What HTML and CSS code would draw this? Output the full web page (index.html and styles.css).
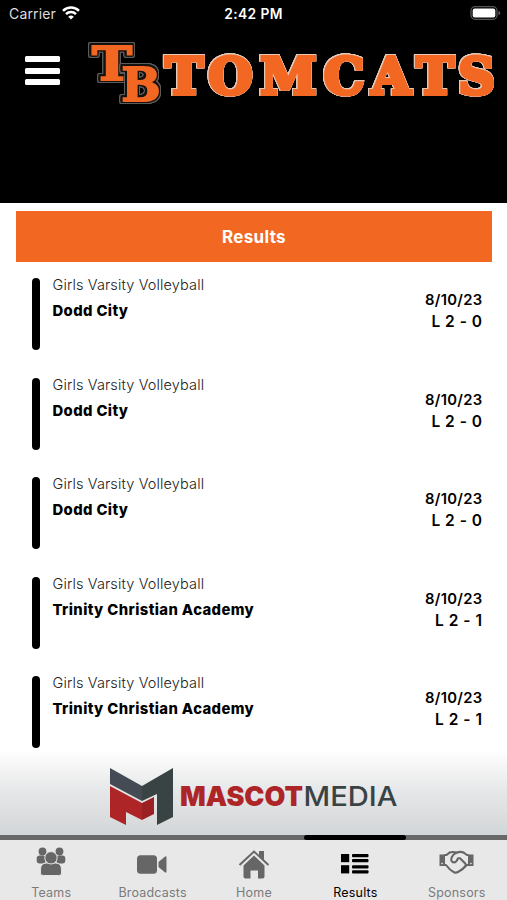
FILE: index.html
```
<!DOCTYPE html>
<html lang="en">
<head>
  <meta charset="UTF-8">
  <title>Tomcats Results</title>
  <link rel="stylesheet" href="styles.css">
</head>
<body>
  <div class="app">
    <header class="header">
      <!-- Status bar -->
      <div class="status-bar">
        <div class="carrier">
          <span class="carrier-name">Carrier</span>
          <svg class="wifi" width="18" height="14" viewBox="0 0 18 14" fill="none" stroke="#fff" stroke-width="2.5">
            <path d="M1 4.9a11.3 11.3 0 0 1 16 0"/>
            <path d="M4 8.2a7 7 0 0 1 10 0"/>
            <path d="M9 13.6L6.2 10.8a4 4 0 0 1 5.6 0z" fill="#fff" stroke="none"/>
          </svg>
        </div>
        <span class="time">2:42 PM</span>
        <svg class="battery" width="31" height="14" viewBox="0 0 31 14">
          <rect x="1" y=".7" width="26" height="12.6" rx="4" fill="none" stroke="#555" stroke-width="1.3"/>
          <rect x="2.7" y="2.4" width="22.6" height="9.2" rx="2" fill="#fff"/>
          <path d="M28.5 5v4.2q1.8-.6 1.8-2.1t-1.8-2.1z" fill="#666"/>
        </svg>
      </div>

      <div class="brand-row">
        <button class="menu-button" title="Menu"><span></span><span></span><span></span></button>
        <svg class="logo" width="412" height="76" viewBox="86 36 412 76">
          <text class="mono" x="92" y="80" textLength="40" lengthAdjust="spacingAndGlyphs">T</text>
          <text class="mono" x="121.5" y="100.7" textLength="39" lengthAdjust="spacingAndGlyphs">B</text>
          <text class="word" x="165.5 208.5 260.5 324 371.5 416.5 458.5" y="93.7">TOMCATS</text>
        </svg>
      </div>
    </header>

    <main class="content">
      <h1 class="title">Results</h1>
      <ul class="results">
        <li class="result">
          <div class="game"><span class="sport">Girls Varsity Volleyball</span><span class="opponent">Dodd City</span></div>
          <div class="outcome"><span>8/10/23</span><span class="score">L 2 - 0</span></div>
        </li>
        <li class="result">
          <div class="game"><span class="sport">Girls Varsity Volleyball</span><span class="opponent">Dodd City</span></div>
          <div class="outcome"><span>8/10/23</span><span class="score">L 2 - 0</span></div>
        </li>
        <li class="result">
          <div class="game"><span class="sport">Girls Varsity Volleyball</span><span class="opponent">Dodd City</span></div>
          <div class="outcome"><span>8/10/23</span><span class="score">L 2 - 0</span></div>
        </li>
        <li class="result">
          <div class="game"><span class="sport">Girls Varsity Volleyball</span><span class="opponent">Trinity Christian Academy</span></div>
          <div class="outcome"><span>8/10/23</span><span class="score">L 2 - 1</span></div>
        </li>
        <li class="result">
          <div class="game"><span class="sport">Girls Varsity Volleyball</span><span class="opponent">Trinity Christian Academy</span></div>
          <div class="outcome"><span>8/10/23</span><span class="score">L 2 - 1</span></div>
        </li>
      </ul>
    </main>

    <!-- Sponsor banner -->
    <div class="sponsor">
      <svg width="290" height="60" viewBox="110 767 290 60">
        <path d="M110 768l32 18v15l-32-17z" fill="#444b55"/>
        <path d="M142 786l31-18v49l-16 8v-31l-15 7z" fill="#3a4344"/>
        <path d="M110 786l32 17v17l-16-8v13l-16-8z" fill="#ad2527"/>
        <path d="M142 803l12-6v17l-12 6z" fill="#9c2023"/>
        <text class="mascot" x="180" y="806" textLength="123" lengthAdjust="spacingAndGlyphs">MASCOT</text>
        <text class="media" x="303.5" y="806" textLength="94" lengthAdjust="spacingAndGlyphs">MEDIA</text>
      </svg>
    </div>

    <nav class="tabs">
      <a class="tab">
        <svg width="34" height="32" viewBox="0 0 34 32" fill="currentColor">
          <circle cx="8.5" cy="6.5" r="3.9"/><circle cx="25.5" cy="6.5" r="3.9"/>
          <rect x="2.7" y="10.5" width="9" height="8" rx="3"/><rect x="22.3" y="10.5" width="9" height="8" rx="3"/>
          <path d="M6.5 28.5v-4q0-6.5 6-6.5h9q6 0 6 6.5v4q0 2-3 2h-15q-3 0-3-2z" stroke="#e8e8e8"/>
          <circle cx="17" cy="12.8" r="6.2" stroke="#e8e8e8"/>
        </svg>
        <span>Teams</span>
      </a>
      <a class="tab">
        <svg width="34" height="32" viewBox="0 0 34 32" fill="currentColor">
          <rect x="1" y="10.3" width="20" height="18.5" rx="3.5"/>
          <path d="M22.5 17l6-5q2-1.5 2 .5v14q0 2-2 .5l-6-5z"/>
        </svg>
        <span>Broadcasts</span>
      </a>
      <a class="tab">
        <svg width="34" height="34" viewBox="0 0 34 34" fill="currentColor">
          <path d="M6.5 20.5L17 10.5 27.500 20.500v11q0 2-2 2h-4.500v-8h-7.500v8h-5q-2 0-2-2z"/>
          <path d="M2.500 20L17 6.500 31.500 20" fill="none" stroke="currentColor" stroke-width="2"/>
          <path d="M22 6h5v9l-5-4.500z"/>
        </svg>
        <span>Home</span>
      </a>
      <a class="tab active">
        <svg width="34" height="32" viewBox="0 0 34 32" fill="currentColor">
          <rect x="3" y="9" width="8.2" height="8.2"/><rect x="3" y="20.2" width="8.2" height="8.2"/>
          <rect x="14" y="9" width="16.5" height="3.2" rx="1"/><rect x="14" y="14" width="16.5" height="3.2" rx="1"/>
          <rect x="14" y="20.2" width="16.5" height="3.2" rx="1"/><rect x="14" y="25.2" width="16.5" height="3.2" rx="1"/>
        </svg>
        <span>Results</span>
      </a>
      <a class="tab">
        <svg width="36" height="32" viewBox="0 0 36 32" fill="none" stroke="currentColor" stroke-width="2.1" stroke-linejoin="round" stroke-linecap="round">
          <path d="M6 10h1.500l3-2.400q4-1.400 7 .2 4-1.800 7.500 0l3 2.200H29M6 20h1q3.500 5 8 7.200 2 1 4-.2 5-2.500 8-6.500l1-.5h1"/>
          <path d="M17.500 7.800q-3 1-4.500 4-2 4 1 5.500 3 .8 5-4h2l5.500 5.500q1 1.500-.5 3"/>
          <path d="M.5 9.500H6V21H.5zM29 9.500h5.500V21H29z" fill="currentColor" stroke="none"/>
          <path d="M3 18.500h.2M31.800 18.500h.2" stroke="#e8e8e8" stroke-width="1.500"/>
        </svg>
        <span>Sponsors</span>
      </a>
    </nav>
  </div>
</body>
</html>
```
FILE: styles.css
```
* {
  box-sizing: border-box;
}

body {
  margin: 0;
  font-family: Inter, sans-serif;
  background: #fff;
}

.app {
  display: flex;
  flex-direction: column;
  width: 507px;
  height: 900px;
  overflow: hidden;
}

.header {
  flex: none;
  height: 203px;
  background: #000;
  color: #fff;
}

.status-bar {
  display: grid;
  grid-template-columns: 1fr auto 1fr;
  align-items: center;
  height: 28px;
  padding: 0 6px 1px 9px;
}

.carrier {
  display: flex;
  align-items: center;
  gap: 6px;
  font-size: 14px;
  color: #ddd;
}

.carrier-name {
  width: 47px;
  letter-spacing: 0.15px;
}

.wifi {
  margin-top: -1px;
}

.time {
  margin-left: -3px;
  font-size: 13.8px;
  font-weight: 600;
  letter-spacing: 0.4px;
}

.battery {
  justify-self: end;
  margin-top: -1px;
}

.brand-row {
  display: flex;
  align-items: flex-start;
  padding: 8px 9px 0 25px;
}

.menu-button {
  display: flex;
  flex-direction: column;
  gap: 5.5px;
  width: 36px;
  margin: 20px 25px 0 0;
  padding: 0;
  border: none;
  background: none;
}

.menu-button span {
  width: 35px;
  height: 6px;
  border-radius: 1.5px;
  background: #fff;
}

.logo {
  flex: none;
}

.mono {
  font: bold 47px "DejaVu Serif", serif;
  fill: #f26722;
  stroke: #f26722;
  stroke-width: 2px;
  filter: drop-shadow(1.3px 0 #15110e) drop-shadow(-1.3px 0 #15110e)
    drop-shadow(0 1.3px #15110e) drop-shadow(0 -1.3px #15110e)
    drop-shadow(1px 0 #5c5c5c) drop-shadow(-1px 0 #5c5c5c)
    drop-shadow(0 1px #5c5c5c) drop-shadow(0 -1px #5c5c5c);
}

.word {
  font: bold 50.5px "DejaVu Serif", serif;
  fill: #f26722;
  stroke: #f26722;
  stroke-width: 4.2px;
  filter: drop-shadow(0.7px 0 #e3c9ba) drop-shadow(-0.7px 0 #e3c9ba)
    drop-shadow(0 0.7px #e3c9ba) drop-shadow(0 -0.7px #e3c9ba);
}

.content {
  flex: none;
  height: 547px;
  padding: 8px 15px 0 16px;
}

.title {
  margin: 0 0 16.4px;
  height: 51px;
  line-height: 52px;
  text-align: center;
  font-size: 17px;
  font-weight: 700;
  letter-spacing: 0.3px;
  color: #fff;
  background: #f26722;
}

.results {
  display: flex;
  flex-direction: column;
  gap: 27.4px;
  margin: 0;
  padding: 0 9.5px 0 16px;
  list-style: none;
}

.result {
  display: flex;
  height: 72px;
}

.result::before {
  content: "";
  width: 8px;
  margin-right: 12.5px;
  border-radius: 4px;
  background: #000;
}

.game {
  display: flex;
  flex-direction: column;
  flex: 1;
  font-size: 14.5px;
}

.sport {
  height: 26px;
  line-height: 14px;
  font-weight: 300;
  letter-spacing: 0.13px;
  color: #222;
}

.opponent {
  line-height: 15px;
  font-size: 14.8px;
  font-weight: 800;
  letter-spacing: 0.4px;
}

.outcome {
  display: flex;
  flex-direction: column;
  align-items: flex-end;
  padding-top: 11px;
  font-size: 14.8px;
  font-weight: 600;
  line-height: 22px;
  letter-spacing: 0.3px;
}

.score {
  font-size: 15.5px;
  letter-spacing: 0.5px;
}

.sponsor {
  flex: none;
  height: 85px;
  padding: 17px 0 0 110px;
  background: linear-gradient(#fff, #e5e6e7 50%, #d3d6d8);
}

.mascot {
  font: 900 27.5px Inter, sans-serif;
  fill: #ad2527;
}

.media {
  font: 500 27.5px Inter, sans-serif;
  fill: #3a4344;
}

.tabs {
  display: grid;
  grid-template-columns: repeat(5, 1fr);
  flex: none;
  height: 65px;
  border-top: 5px solid #686868;
  background: #e8e8e8;
}

.tab {
  position: relative;
  display: flex;
  flex-direction: column;
  align-items: center;
  justify-content: space-between;
  padding: 5px 0 0 1px;
  color: #666;
  font-size: 12.5px;
}

.tab svg {
  flex: none;
}

.tab span {
  line-height: 15px;
  color: #7b7b7b;
  letter-spacing: 0.2px;
}

.tab.active,
.tab.active span {
  color: #000;
}

/* indicator sits on the bar's top border */
.tab.active::before {
  content: "";
  position: absolute;
  top: -5px;
  left: 0;
  width: 100%;
  height: 5px;
  border-radius: 3px;
  background: #000;
}
```
